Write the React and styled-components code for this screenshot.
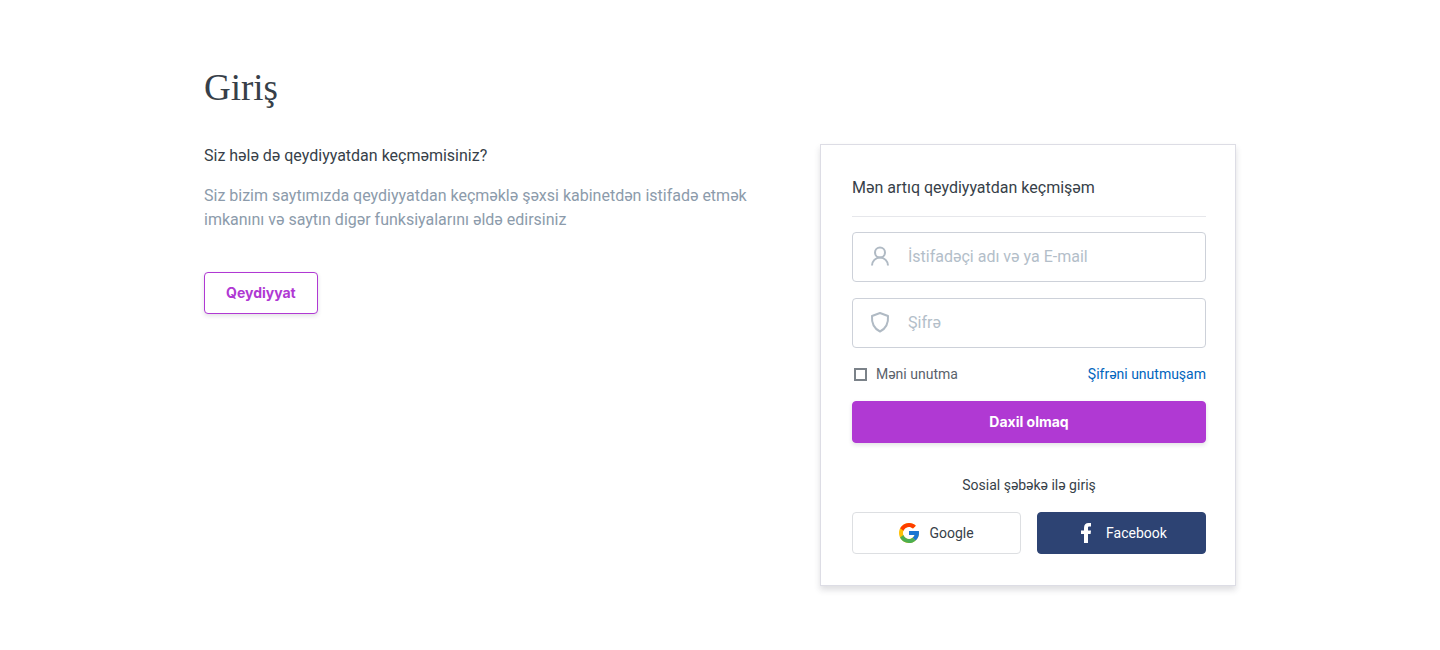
import React from "react";
import styled, { createGlobalStyle } from "styled-components";

const GlobalStyle = createGlobalStyle`
  *, *::before, *::after { box-sizing: border-box; }
  body {
    margin: 0;
    background: #fff;
    color: #373f49;
    font: 16px/24px Roboto, "Liberation Sans", sans-serif;
  }
  button, input { font: inherit; }
`;

const Page = styled.main`
  max-width: 1080px;
  margin: 0 auto;
  padding: 64px 24px;
`;

const PageTitle = styled.h1`
  margin: 0 0 32px;
  font: 400 37px/48px "Liberation Serif", serif;
  color: #373f49;
`;

const Columns = styled.div`
  display: flex;
  flex-wrap: wrap;
  justify-content: space-between;
  align-items: flex-start;
  gap: 48px;
`;

const Intro = styled.section`
  flex: 1 1 320px;
  max-width: 568px;
`;

const SectionTitle = styled.h2`
  margin: 0;
  font-size: 16px;
  font-weight: 400;
  line-height: 24px;
`;

const IntroText = styled.p`
  margin: 16px 0 40px;
  color: #8c9bab;
`;

const Button = styled.button`
  display: flex;
  align-items: center;
  justify-content: center;
  height: 42px;
  padding: 0 21px;
  border: 1px solid #b039d3;
  border-radius: 4px;
  background: ${(p) => (p.$filled ? "#b039d3" : "#fff")};
  color: ${(p) => (p.$filled ? "#fff" : "#b039d3")};
  font: 700 14px/20px Inter, Roboto, sans-serif;
  box-shadow: 0 2px 4px rgba(50, 50, 71, 0.14);
  cursor: pointer;
`;

const Card = styled.section`
  flex: 0 1 416px;
  padding: 31px 29px 31px 31px;
  border: 1px solid #dddde5;
  background: #fff;
  box-shadow: 0 4px 6px rgba(50, 50, 71, 0.16);
`;

const CardHeader = styled.header`
  padding-bottom: 16px;
  border-bottom: 1px solid #e6e7eb;
`;

const Form = styled.form`
  display: flex;
  flex-direction: column;
  gap: 16px;
  margin-top: 15px;
`;

const Field = styled.label`
  display: flex;
  align-items: center;
  gap: 16px;
  height: 50px;
  padding: 0 15px;
  border: 1px solid #cdd1d9;
  border-radius: 4px;
  color: #b0bac4;

  svg { flex: none; }
`;

const FieldInput = styled.input`
  flex: 1;
  min-width: 0;
  padding: 0;
  border: 0;
  outline: 0;
  background: none;
  color: #373f49;

  &::placeholder { color: #b3bec9; opacity: 1; }
`;

const Options = styled.div`
  display: flex;
  align-items: center;
  justify-content: space-between;
  font-size: 14px;
  line-height: 21px;
`;

const Remember = styled.label`
  display: flex;
  align-items: center;
  gap: 9px;
  padding-left: 2px;
  color: #5a626b;
`;

const Checkbox = styled.input`
  appearance: none;
  width: 13px;
  height: 13px;
  margin: 0;
  border: 2px solid #7b8289;
  outline: 0;

  &:checked { background: #b039d3; }
`;

const ForgotLink = styled.a`
  color: #0065bd;
  text-decoration: none;
`;

const SocialTitle = styled.p`
  margin: 32px 0 17px;
  text-align: center;
  font-size: 14px;
  line-height: 20px;
`;

const SocialRow = styled.div`
  display: grid;
  grid-template-columns: 1fr 1fr;
  gap: 16px;
`;

const SocialButton = styled.button`
  display: flex;
  align-items: center;
  justify-content: center;
  gap: 10px;
  height: 42px;
  border: 1px solid ${(p) => (p.$dark ? "#2d4373" : "#dddfe2")};
  border-radius: 4px;
  background: ${(p) => (p.$dark ? "#2d4373" : "#fff")};
  color: ${(p) => (p.$dark ? "#fff" : "#373f49")};
  font-size: 14px;
  line-height: 20px;
  cursor: pointer;
`;

const UserIcon = () => (
  <svg width="24" height="24" viewBox="0 0 24 24" fill="none" stroke="currentColor" strokeWidth="2" aria-hidden="true">
    <circle cx="12" cy="7.5" r="5" />
    <path d="M4 20.500a8 8 0 0 1 16 0" />
  </svg>
);

const ShieldIcon = () => (
  <svg width="24" height="24" viewBox="0 0 24 24" fill="none" stroke="currentColor" strokeWidth="2" strokeLinejoin="round" aria-hidden="true">
    <path d="M12 2L4 5C3.500 11.500 6 17.500 12 20.500C18 17.500 20.500 11.500 20 5Z" />
  </svg>
);

const GoogleIcon = () => (
  <svg width="20" height="20" viewBox="4 4 40 40" aria-hidden="true">
    <path fill="#FFC107" d="M43.611 20.083H42V20H24v8h11.303c-1.649 4.657-6.080 8-11.303 8-6.627 0-12-5.373-12-12s5.373-12 12-12c3.059 0 5.842 1.154 7.961 3.039l5.657-5.657C34.046 6.053 29.268 4 24 4 12.955 4 4 12.955 4 24s8.955 20 20 20 20-8.955 20-20c0-1.341-.138-2.650-.389-3.917z" />
    <path fill="#FF3D00" d="M6.306 14.691l6.571 4.819C14.655 15.108 18.961 12 24 12c3.059 0 5.842 1.154 7.961 3.039l5.657-5.657C34.046 6.053 29.268 4 24 4 16.318 4 9.656 8.337 6.306 14.691z" />
    <path fill="#4CAF50" d="M24 44c5.166 0 9.860-1.977 13.409-5.192l-6.190-5.238C29.211 35.091 26.715 36 24 36c-5.202 0-9.619-3.317-11.283-7.946l-6.522 5.025C9.505 39.556 16.227 44 24 44z" />
    <path fill="#1976D2" d="M43.611 20.083H42V20H24v8h11.303c-.792 2.237-2.231 4.166-4.087 5.571l6.193 5.237C36.971 39.205 44 34 44 24c0-1.341-.138-2.650-.389-3.917z" />
  </svg>
);

const FacebookIcon = () => (
  <svg width="20" height="20" viewBox="0 0 20 20" fill="#fff" aria-hidden="true">
    <path d="M8 20V11H5V7.500H8V5C8 1.700 9.700 0 12.500 0H15V3.500H13.300C12.200 3.500 12 4 12 5V7.500H15L14.600 11H12V20Z" />
  </svg>
);

export default function App() {
  return (
    <>
      <GlobalStyle />
      <Page>
        <PageTitle>Giriş</PageTitle>
        <Columns>
          <Intro>
            <SectionTitle>Siz hələ də qeydiyyatdan keçməmisiniz?</SectionTitle>
            <IntroText>
              Siz bizim saytımızda qeydiyyatdan keçməklə şəxsi kabinetdən istifadə etmək imkanını və saytın digər
              funksiyalarını əldə edirsiniz
            </IntroText>
            <Button type="button">Qeydiyyat</Button>
          </Intro>
          <Card>
            <CardHeader>
              <SectionTitle>Mən artıq qeydiyyatdan keçmişəm</SectionTitle>
            </CardHeader>
            <Form onSubmit={(e) => e.preventDefault()}>
              <Field>
                <UserIcon />
                <FieldInput type="text" placeholder="İstifadəçi adı və ya E-mail" aria-label="İstifadəçi adı və ya E-mail" />
              </Field>
              <Field>
                <ShieldIcon />
                <FieldInput type="password" placeholder="Şifrə" aria-label="Şifrə" />
              </Field>
              <Options>
                <Remember>
                  <Checkbox type="checkbox" />
                  Məni unutma
                </Remember>
                <ForgotLink href="#forgot">Şifrəni unutmuşam</ForgotLink>
              </Options>
              <Button type="submit" $filled>Daxil olmaq</Button>
            </Form>
            <SocialTitle>Sosial şəbəkə ilə giriş</SocialTitle>
            <SocialRow>
              <SocialButton type="button"><GoogleIcon />Google</SocialButton>
              <SocialButton type="button" $dark><FacebookIcon />Facebook</SocialButton>
            </SocialRow>
          </Card>
        </Columns>
      </Page>
    </>
  );
}
